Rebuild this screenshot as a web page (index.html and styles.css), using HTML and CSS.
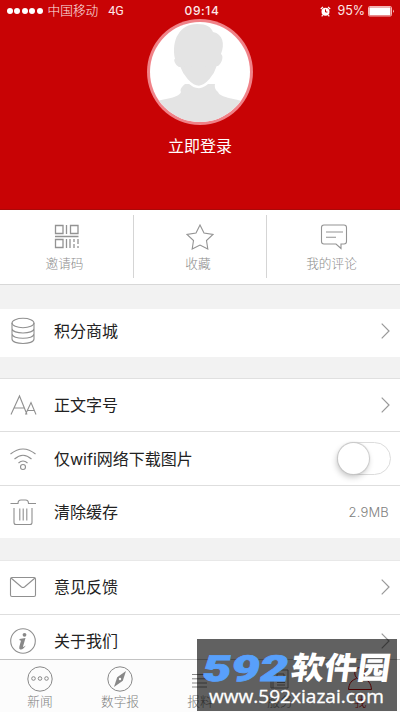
FILE: index.html
```html
<!DOCTYPE html>
<html lang="zh-CN">
<head>
<meta charset="utf-8">
<title>我</title>
<link rel="stylesheet" href="styles.css">
</head>
<body>
<div class="app">
  <header class="hero">
    <div class="status">
      <div class="carrier"><span class="dots"><i></i><i></i><i></i><i></i><i></i></span><span class="operator">中国移动</span><span>4G</span></div>
      <div class="time">09:14</div>
      <div class="power">
        <svg width="11" height="11" viewBox="0 0 11 11"><circle cx="5.5" cy="5.8" r="4" fill="#fff"/><path d="M.8 3 3 .9M10.2 3 8 .9M2.7 9.2l-1 1.2M8.3 9.2l1 1.2" stroke="#fff" stroke-width="1.2"/><path d="M5.5 3.4v2.6H7.4" stroke="#c80305" fill="none"/></svg>
        <span class="percent">95%</span>
        <svg width="27" height="11" viewBox="0 0 27 11"><rect x=".5" y=".5" width="23" height="9.5" rx="1.2" fill="none" stroke="#f5b5b5"/><rect x="1.3" y="1.3" width="21.2" height="8" fill="#fff"/><path d="M25 3.5q1.6 1.8 0 3.6z" fill="#fff"/></svg>
      </div>
    </div>
    <svg class="avatar" width="106" height="106" viewBox="0 0 106 106">
      <defs><clipPath id="disc"><circle cx="53" cy="53" r="50"/></clipPath></defs>
      <circle cx="53" cy="53" r="53" fill="#f08288"/>
      <circle cx="53" cy="53" r="50" fill="#fff"/>
      <g clip-path="url(#disc)" fill="#e4e4e4">
        <path d="M0 86C10 79 31 81 34 73q-2-3 4-8l30 0q-1 5 3 8C74 80 92 79 106 86v20H0z"/>
        <path d="M28 40C24 21 33 5 50 5c10 0 14 3 16 8 10 2 12 12 8 22 3 2 1 9-3 12C68 57 60 67 52 68 44 68 35 57 32 48c-4-2-6-8-4-8z" stroke="#fff" stroke-width="2.500"/>
        <path d="M28 40C24 21 33 5 50 5c10 0 14 3 16 8 10 2 12 12 8 22 3 2 1 9-3 12L32 48c-4-2-6-8-4-8z"/>
      </g>
    </svg>
    <div class="login">立即登录</div>
  </header>

  <nav class="shortcuts">
    <a class="shortcut"><svg width="26" height="26" viewBox="0 0 26 26"><path d="M1.500 1.500H9v8H1.500zM16.500 1.500H24v8h-7.500zM1.500 15.500H9v8H1.500zM12.500 1v9M1 12.500h23.500M12.500 15v9M16 15v9M20 15v3m0 2v4M24 15v5m0 2v2" stroke-width="1.300"/></svg><span class="shift">邀请码</span></a>
    <a class="shortcut middle"><svg width="28" height="26" viewBox="0 0 28 26"><path d="M14 1l4 8 9 1.500-6.500 6 1.300 8.500L14 21l-7.800 4 1.300-8.500L1 10.500 10 9z"/></svg><span class="shift">收藏</span></a>
    <a class="shortcut"><svg width="28" height="26" viewBox="0 0 28 26"><path d="M4 1h20q2.500 0 2.500 2.500v14q0 2.500-2.500 2.500h-3v4.500L16 20H4q-2.500 0-2.500-2.500v-14Q1.500 1 4 1zM6 8h17M6 13.200h10"/></svg><span class="shift">我的评论</span></a>
  </nav>

  <section class="group shop">
    <div class="row"><svg class="icon" width="28" height="28" viewBox="0 0 28 28"><ellipse cx="14" cy="6" rx="11" ry="4.700"/><path d="M3 6v16c0 6 22 6 22 0V6M3 11.500c0 6 22 6 22 0M3 16.800c0 6 22 6 22 0"/></svg><span class="label">积分商城</span><svg class="arrow" width="9" height="16" viewBox="0 0 9 16"><path d="M.7.700 8 8 .7 15.300"/></svg></div>
  </section>

  <section class="group settings">
    <div class="row"><svg class="icon" width="28" height="28" viewBox="0 0 28 28"><path d="M2 23.500 10.500 5 18 23.500M5 17h10.500M16.500 23.500l5.500-12 5 12M18.500 19.500h7"/></svg><span class="label">正文字号</span><svg class="arrow" width="9" height="16" viewBox="0 0 9 16"><path d="M.7.700 8 8 .7 15.300"/></svg></div>
    <div class="row"><svg class="icon" width="28" height="28" viewBox="0 0 28 28"><path d="M1.500 9q12.500-10 25 0M5.500 14q8.500-7.500 17 0M9.500 18q4.500-4 9 0"/><circle cx="14" cy="22" r="2.500"/></svg><span class="label">仅<span class="latin">wifi</span>网络下载图片</span><span class="toggle"><i></i></span></div>
    <div class="row"><svg class="icon" width="28" height="28" viewBox="0 0 28 28"><path d="M1.500 5.500H9q0-3.500 3-3.500h4.500q3 0 3 3.500H27M5 10v14.500q0 2 2 2h14q2 0 2-2V10M10.800 10.500v12M14.200 10.500v12M17.800 10.500v12"/></svg><span class="label">清除缓存</span><span class="size">2.9MB</span></div>
  </section>

  <section class="group about">
    <div class="row"><svg class="icon" width="28" height="28" viewBox="0 0 28 28"><rect x="1.500" y="4.500" width="25" height="19" rx="1.500"/><path d="M2 5 12.500 14q1.500 1 3 0L26 5"/></svg><span class="label">意见反馈</span><svg class="arrow" width="9" height="16" viewBox="0 0 9 16"><path d="M.7.700 8 8 .7 15.300"/></svg></div>
    <div class="row"><svg class="icon" width="28" height="28" viewBox="0 0 28 28"><circle cx="14" cy="14" r="12.300"/><circle cx="15.500" cy="7.800" r="1.900" class="solid"/><path d="M10.500 12l6-.9-2.500 8.400q-.2 1.300 2.800-.9-3 4.500-5.500 3.800-1.700-.5-.9-2.900l1.500-5.500q.1-.9-1.400-.8z" class="solid"/></svg><span class="label">关于我们</span><svg class="arrow" width="9" height="16" viewBox="0 0 9 16"><path d="M.7.700 8 8 .7 15.300"/></svg></div>
  </section>

  <nav class="tabs">
    <a class="tab"><svg width="26" height="26" viewBox="0 0 26 26"><circle cx="13" cy="13" r="12.200"/><circle cx="6.500" cy="12.500" r="1.800"/><circle cx="13" cy="12.500" r="1.800"/><circle cx="19.500" cy="12.500" r="1.800"/></svg><span>新闻</span></a>
    <a class="tab"><svg width="26" height="26" viewBox="0 0 26 26"><circle cx="13" cy="13" r="12.200"/><path d="M19 5 15.800 14.800 7 21 10.200 11.200z" class="solid"/><circle cx="13" cy="13" r="1.200" fill="#fff" stroke="none"/></svg><span>数字报</span></a>
    <a class="tab"><svg width="26" height="26" viewBox="0 0 26 26"><path d="M5 8.500h15M5 12.800h15M5 17h15M5 21h15"/></svg><span>报料</span></a>
    <a class="tab"><svg width="26" height="26" viewBox="0 0 26 26"><path d="M6 4h15v18H4V9h2zM6 9v13M10 8h7v5h-7zM10 16.500h8M10 19h8"/></svg><span>服务</span></a>
    <a class="tab active"><svg width="26" height="26" viewBox="0 0 26 26"><path d="M13 1.500c7 0 7 11 0 12-7-1-7-12 0-12zM9.500 12.500C5 14 2 17 1.500 23.500h23C24 17 21 14 16.500 12.500"/></svg><span>我</span></a>
  </nav>

  <aside class="watermark">
    <svg width="200" height="73" viewBox="0 0 200 73">
      <g transform="translate(4 42) skewX(-9)"><text class="digits" textLength="86" lengthAdjust="spacingAndGlyphs">592</text></g>
      <g transform="translate(93 39.500) skewX(-8)"><text class="brand" textLength="99" lengthAdjust="spacingAndGlyphs">软件园</text></g>
      <text class="url" x="12" y="64" textLength="175" lengthAdjust="spacingAndGlyphs">www.592xiazai.com</text>
    </svg>
  </aside>
</div>
</body>
</html>
```
FILE: styles.css
```css
* { box-sizing: border-box; }
body { margin: 0; background: #f2f2f2; font-family: Roboto, "Noto Sans CJK SC", sans-serif; }
svg { display: block; fill: none; flex: none; }
.app { position: relative; width: 400px; height: 712px; overflow: hidden; display: flex; flex-direction: column; }

.hero { height: 210px; flex: none; background: #c80305; color: #fff; display: flex; flex-direction: column; align-items: center; border-bottom: 1px solid #ab0808; }
.status { width: 100%; height: 19px; flex: none; padding: 3px 5px 0 7px; display: grid; grid-template-columns: 1fr auto 1fr; align-items: center; font-size: 12.500px; line-height: 16px; color: #fde8e8; }
.carrier, .power { display: flex; align-items: center; }
.dots { display: flex; gap: 1.400px; margin-right: 5px; }
.dots i { width: 6px; height: 6px; border-radius: 50%; background: #fff; }
.operator { margin-right: 10px; font-size: 12.700px; font-weight: 300; }
.time { font: 500 12px/16px Inter, sans-serif; letter-spacing: .6px; color: #fde8e8; padding-left: 2px; }
.power { justify-content: flex-end; }
.percent { margin: 0 3px 0 6px; font: 12.500px/16px Inter, sans-serif; }
.login { margin-top: 11px; font-size: 16px; line-height: 22px; }

.shortcuts { height: 75px; flex: none; background: #fff; border-bottom: 1px solid #d8d8d8; display: grid; grid-template-columns: 133px 134px 133px; padding: 5px 0 6px; }
.shortcut { display: flex; flex-direction: column; align-items: center; padding-top: 9px; font-size: 12.700px; line-height: 18px; color: #8c8c8c; font-weight: 300; }
.shortcut svg { stroke: #939393; stroke-width: 1.100; margin-bottom: 5px; }
.shift { margin-right: 4px; }
.middle { border-left: 1px solid #d5d5d5; border-right: 1px solid #d5d5d5; }

.group { background: #fff; flex: none; }
.row { height: 53px; padding: 0 10px 0 9px; display: flex; align-items: center; }
.row + .row { height: 54px; border-top: 1px solid #dedede; }
.shop { margin-top: 24px; }
.shop .row { height: 48px; padding-bottom: 4px; }
.settings { margin-top: 21px; border-top: 1px solid #e0e0e0; }
.settings .row:first-child { height: 52px; }
.settings .row:last-child { height: 53px; }
.about { margin-top: 22px; border-top: 1px solid #e8e8e8; }
.about .row { padding-bottom: 2px; }
.icon { stroke: #909090; stroke-width: 1.100; margin-right: 17px; }
.solid { fill: #888; stroke: none; }
.label { flex: 1; color: #222; font-size: 16px; line-height: 22px; padding-top: 2px; }
.latin { font-family: Inter, sans-serif; }
.arrow { stroke: #999; stroke-width: 1.200; }
.size { font: 300 13px/18px Inter, sans-serif; color: #808080; letter-spacing: .2px; margin-right: 1px; }
.toggle { width: 54px; height: 33px; border: 1px solid #dcdcdc; border-radius: 17px; margin-right: -1px; }
.toggle i { display: block; width: 31px; height: 31px; border-radius: 50%; background: #fff; box-shadow: 0 0 1px 1px #c8c8c8, -1px 3px 6px rgba(0,0,0,.24); }

.tabs { position: absolute; left: 0; bottom: 0; width: 400px; height: 53px; display: grid; grid-template-columns: repeat(5, 1fr); background: #fcfcfc; border-top: 1px solid #c3c3c3; }
.tab { display: flex; flex-direction: column; align-items: center; padding-top: 6px; font-size: 12.700px; line-height: 19px; color: #7c7c7c; font-weight: 300; }
.tab svg { stroke: #888; stroke-width: 1; }
.active { color: #c80305; }
.active svg { stroke: #c80305; }

.watermark { position: absolute; left: 197px; top: 639px; width: 200px; height: 72px; background: rgba(0, 0, 0, .62); overflow: hidden; }
.digits { font: 900 36px Roboto, sans-serif; fill: #58a0fb; stroke: #58a0fb; stroke-width: .8; }
.brand { font: 900 31px "Noto Sans CJK SC", sans-serif; fill: #fff; }
.url { font: 19px "Open Sans", sans-serif; fill: #fff; stroke: #fff; stroke-width: .35; }
```
